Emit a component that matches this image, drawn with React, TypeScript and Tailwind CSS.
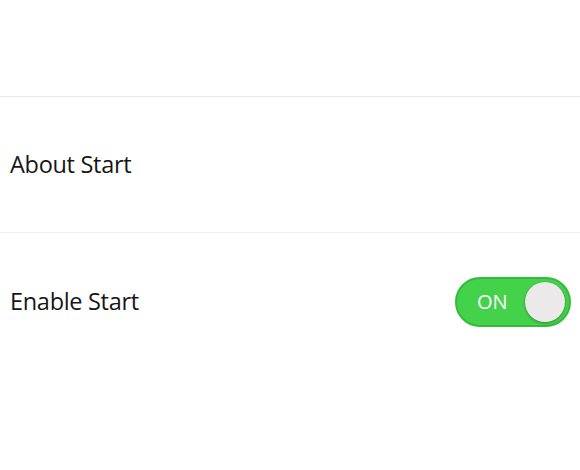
import { useState } from 'react';

export default function App() {
  const [enabled, setEnabled] = useState(true);

  return (
    <div className="w-[580px] h-[470px] bg-white overflow-hidden" style={{ fontFamily: '"Open Sans", "Liberation Sans", sans-serif' }}>
      <div className="h-[96px]" />
      <div className="h-px bg-[#e9e9e9]" />

      {/* About row */}
      <div className="h-[135px] flex items-center px-[10px]">
        <span className="text-[23.5px] text-[#161616] tracking-[-0.3px]">About Start</span>
      </div>
      <div className="h-px bg-[#efefef]" />

      {/* Enable row */}
      <div className="h-[138px] flex items-center justify-between pl-[10px] pr-[9px]">
        <span className="text-[23.5px] text-[#161616] tracking-[-0.3px]">Enable Start</span>
        <button
          onClick={() => setEnabled(!enabled)}
          className={`w-[116px] h-[50px] rounded-full flex items-center border-2 ${
            enabled ? 'bg-[#44d24b] border-[#33bb3c]' : 'bg-[#e5e5e5] border-[#d0d0d0]'
          }`}
        >
          <span className="flex-1 pl-[20px] text-left text-[20px] font-medium text-white">{enabled ? 'ON' : ''}</span>
          <span className="w-[40px] h-[40px] rounded-full bg-[#ece9ea] mr-[4px] shadow-[0_1px_3px_rgba(0,0,0,0.35)]" />
        </button>
      </div>
    </div>
  );
}
